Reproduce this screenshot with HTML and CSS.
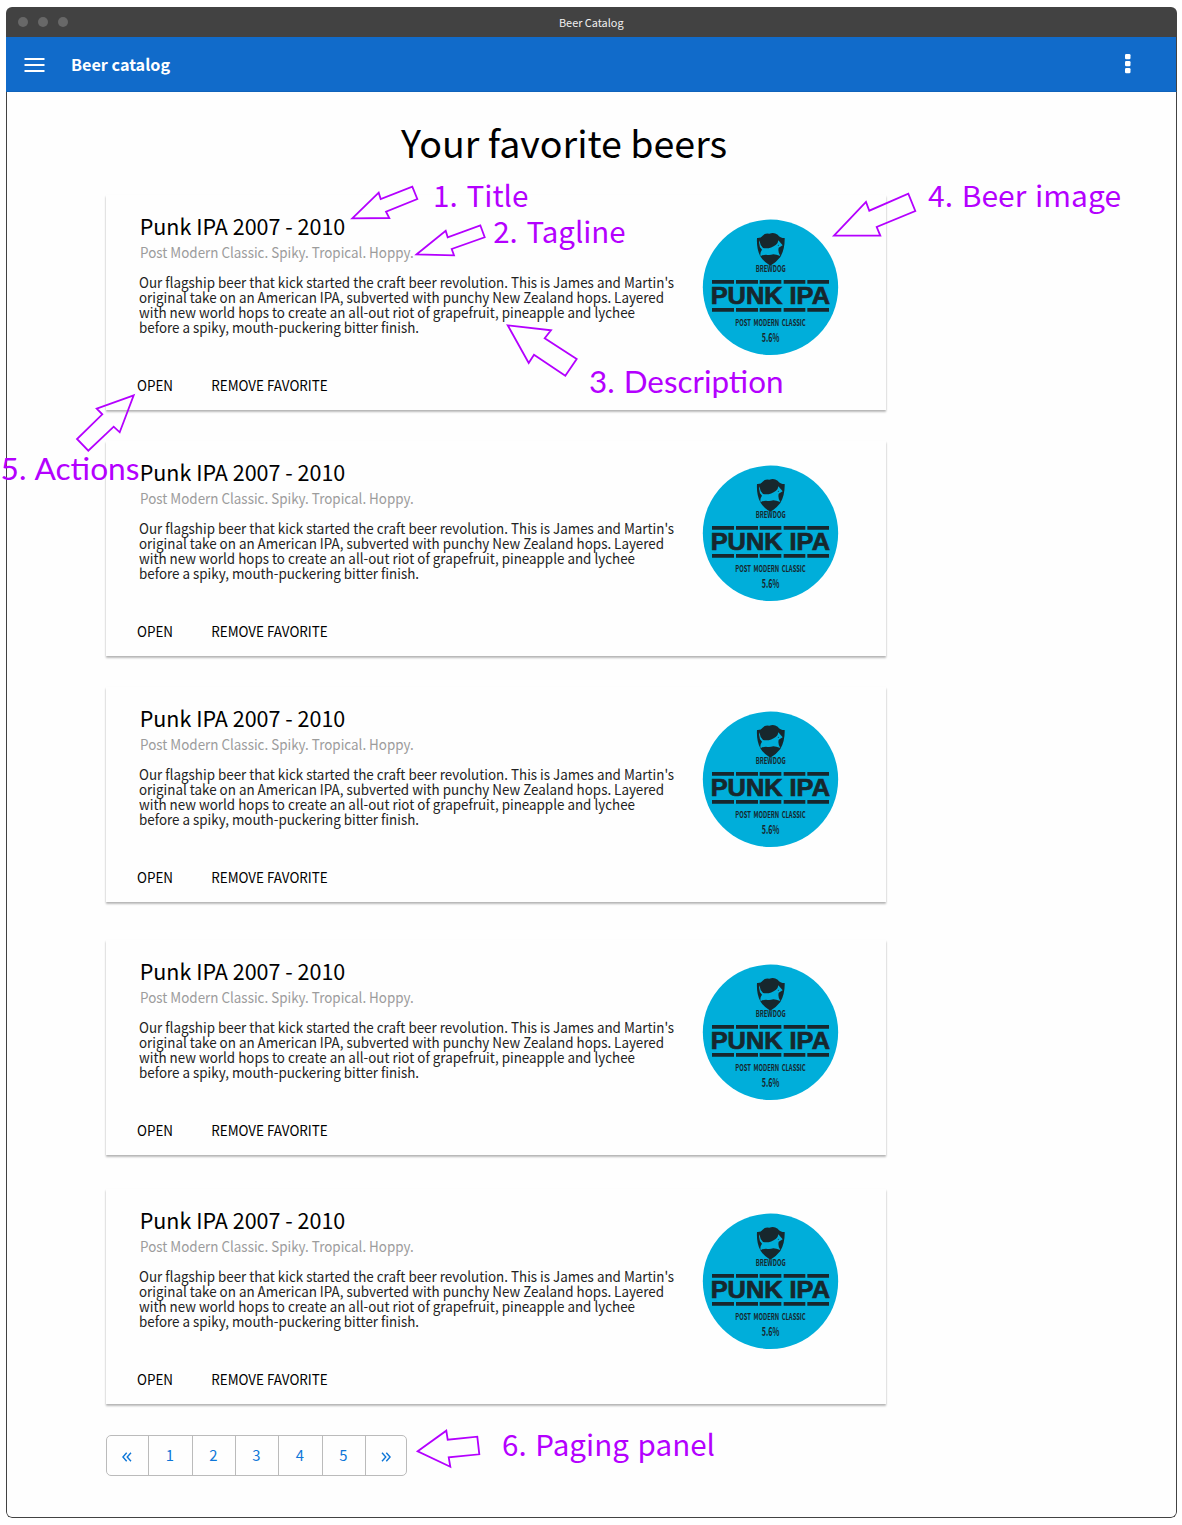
FILE: index.html
```
<!DOCTYPE html>
<html lang="en">
<head>
<meta charset="utf-8">
<title>Beer Catalog</title>
<link rel="stylesheet" href="styles.css">
</head>
<body>
<svg class="defs" width="0" height="0" aria-hidden="true">
  <symbol id="badge" viewBox="0 0 480 480">
    <circle class="badge-disc" cx="241.5" cy="246.800" r="203"/>
    <g class="badge-ink">
      <path d="M201 99Q213 100 218 92Q225 83 238 86Q252 81 263 89Q270 99 284 99Q285 132 271 156Q257 174 241 182Q221 171 211 154Q199 131 201 99Z"/>
      <path d="M66 225h66v11H66zM138 225h66v11h-66zM209 225h65v11h-65zM281 225h65v11h-65zM352 225h65v11h-65zM66 309h66v11H66zM138 309h66v11h-66zM209 309h65v11h-65zM281 309h65v11h-65zM352 309h65v11h-65z"/>
      <text class="badge-small" x="197" y="202" font-size="28" textLength="90" lengthAdjust="spacingAndGlyphs">BREWDOG</text>
      <text class="badge-name" x="62" y="297" font-size="69" textLength="358" lengthAdjust="spacingAndGlyphs">PUNK IPA</text>
      <text class="badge-small" x="136" y="363" font-size="27" textLength="211" lengthAdjust="spacingAndGlyphs" word-spacing="5">POST MODERN CLASSIC</text>
      <text class="badge-small" x="215" y="411" font-size="36" textLength="53" lengthAdjust="spacingAndGlyphs">5.6%</text>
    </g>
    <path class="badge-disc" d="M208 106Q210 121 219 129Q240 133 258 119Q264 115 265 106L278 121L266 128Q263 142 271 153Q258 148 250 148Q238 152 228 149Q219 149 212 154Q209 143 216 134Q205 123 208 106Z"/>
    <circle class="badge-ink" cx="265" cy="121" r="1.500"/>
  </symbol>
</svg>

<div class="window">
  <div class="titlebar">
    <div class="dots"><i></i><i></i><i></i></div>
    <span class="window-title">Beer Catalog</span>
  </div>
  <header class="appbar">
    <svg class="menu" width="21" height="14" viewBox="0 0 21 14"><path d="M0.500 1H20.500M0.500 7H20.500M0.500 13H20.500"/></svg>
    <span class="app-title">Beer catalog</span>
    <svg class="more" width="6" height="20" viewBox="0 0 6 20"><rect width="5.500" height="5.300" rx="1.300"/><rect y="7" width="5.500" height="5.300" rx="1.300"/><rect y="14" width="5.500" height="5.300" rx="1.300"/></svg>
  </header>
  <main class="content">
    <h1>Your favorite beers</h1>

    <article class="card">
      <div class="info">
        <h2>Punk IPA 2007 - 2010</h2>
        <p class="tagline">Post Modern Classic. Spiky. Tropical. Hoppy.</p>
        <p class="desc">Our flagship beer that kick started the craft beer revolution. This is James and Martin's<br>original take on an American IPA, subverted with punchy New Zealand hops. Layered<br>with new world hops to create an all-out riot of grapefruit, pineapple and lychee<br>before a spiky, mouth-puckering bitter finish.</p>
        <div class="actions"><a>OPEN</a><a>REMOVE FAVORITE</a></div>
      </div>
      <svg class="picture" width="160" height="160"><use href="#badge"/></svg>
    </article>

    <article class="card">
      <div class="info">
        <h2>Punk IPA 2007 - 2010</h2>
        <p class="tagline">Post Modern Classic. Spiky. Tropical. Hoppy.</p>
        <p class="desc">Our flagship beer that kick started the craft beer revolution. This is James and Martin's<br>original take on an American IPA, subverted with punchy New Zealand hops. Layered<br>with new world hops to create an all-out riot of grapefruit, pineapple and lychee<br>before a spiky, mouth-puckering bitter finish.</p>
        <div class="actions"><a>OPEN</a><a>REMOVE FAVORITE</a></div>
      </div>
      <svg class="picture" width="160" height="160"><use href="#badge"/></svg>
    </article>

    <article class="card">
      <div class="info">
        <h2>Punk IPA 2007 - 2010</h2>
        <p class="tagline">Post Modern Classic. Spiky. Tropical. Hoppy.</p>
        <p class="desc">Our flagship beer that kick started the craft beer revolution. This is James and Martin's<br>original take on an American IPA, subverted with punchy New Zealand hops. Layered<br>with new world hops to create an all-out riot of grapefruit, pineapple and lychee<br>before a spiky, mouth-puckering bitter finish.</p>
        <div class="actions"><a>OPEN</a><a>REMOVE FAVORITE</a></div>
      </div>
      <svg class="picture" width="160" height="160"><use href="#badge"/></svg>
    </article>

    <article class="card card-fourth">
      <div class="info">
        <h2>Punk IPA 2007 - 2010</h2>
        <p class="tagline">Post Modern Classic. Spiky. Tropical. Hoppy.</p>
        <p class="desc">Our flagship beer that kick started the craft beer revolution. This is James and Martin's<br>original take on an American IPA, subverted with punchy New Zealand hops. Layered<br>with new world hops to create an all-out riot of grapefruit, pineapple and lychee<br>before a spiky, mouth-puckering bitter finish.</p>
        <div class="actions"><a>OPEN</a><a>REMOVE FAVORITE</a></div>
      </div>
      <svg class="picture" width="160" height="160"><use href="#badge"/></svg>
    </article>

    <article class="card card-fifth">
      <div class="info">
        <h2>Punk IPA 2007 - 2010</h2>
        <p class="tagline">Post Modern Classic. Spiky. Tropical. Hoppy.</p>
        <p class="desc">Our flagship beer that kick started the craft beer revolution. This is James and Martin's<br>original take on an American IPA, subverted with punchy New Zealand hops. Layered<br>with new world hops to create an all-out riot of grapefruit, pineapple and lychee<br>before a spiky, mouth-puckering bitter finish.</p>
        <div class="actions"><a>OPEN</a><a>REMOVE FAVORITE</a></div>
      </div>
      <svg class="picture" width="160" height="160"><use href="#badge"/></svg>
    </article>

    <nav class="pager">
      <a><svg width="10" height="10" viewBox="0 0 10 10"><path d="M4.700 .700L.900 5L4.700 9.300M9 .700L5.200 5L9 9.300"/></svg></a>
      <a>1</a><a>2</a><a>3</a><a>4</a><a>5</a>
      <a><svg width="10" height="10" viewBox="0 0 10 10"><path d="M1 .700L4.800 5L1 9.300M5.300 .700L9.100 5L5.300 9.300"/></svg></a>
    </nav>
  </main>
</div>

<svg class="notes" width="1182" height="1525" viewBox="0 0 1182 1525">
  <g class="arrows">
    <path d="M352.300 218.300L378.700 192.700L380.700 199L412.300 186.700L417.300 199L386 211.700L389.300 218Z"/>
    <path d="M416.700 254.300L445.700 230.700L447.700 237.300L480.300 225.300L484.700 237.300L451.700 249L454 255.300Z"/>
    <path d="M507.700 325.300L551 330.300L544.700 338.300L576.700 359L565.300 375.700L534 354.700L528.700 363Z"/>
    <path d="M834 235.700L866 202L869.300 210.700L908.300 193.700L915.300 211L876.700 227L880.300 235.700Z"/>
    <path d="M133.700 395.300L96.700 408.700L102.300 414.300L77 439L88.300 450.700L113.700 426.700L119.700 432.300Z"/>
    <path d="M417.700 1451.300L446.300 1430.700L447.700 1439.700L477.300 1436.700L479.300 1454.300L448.700 1457.300L450.300 1466.700Z"/>
  </g>
  <g class="labels">
    <text x="433" y="207" textLength="95.500" lengthAdjust="spacingAndGlyphs">1. Title</text>
    <text x="493.200" y="243" textLength="132.500" lengthAdjust="spacingAndGlyphs">2. Tagline</text>
    <text class="joined" x="589" y="393" textLength="194.500" lengthAdjust="spacingAndGlyphs">3. Description</text>
    <text x="928" y="207" textLength="193" lengthAdjust="spacingAndGlyphs">4. Beer image</text>
    <text class="joined" x="0.500" y="480" textLength="139" lengthAdjust="spacingAndGlyphs">5. Actions</text>
    <text x="502" y="1456" textLength="213" lengthAdjust="spacingAndGlyphs">6. Paging panel</text>
  </g>
</svg>
</body>
</html>
```
FILE: styles.css
```
* { box-sizing: border-box; }

body {
  margin: 0;
  padding: 7px 5px 7px 6px;
  height: 1525px;
  position: relative;
  background: #fff;
  color: #000;
  font-family: "Noto Sans CJK SC", sans-serif;
}

.defs { position: absolute; }

.window {
  width: 1171px;
  height: 1511px;
  border-radius: 6px;
  overflow: hidden;
  display: flex;
  flex-direction: column;
}

.titlebar {
  flex: none;
  height: 30px;
  background: #424242;
  display: grid;
  grid-template-columns: 1fr auto 1fr;
  align-items: center;
  padding: 0 12px 0 11.500px;
}
.dots { display: flex; gap: 10px; }
.dots i { width: 10px; height: 10px; border-radius: 50%; background: #686868; }
.window-title { font-size: 10.900px; line-height: 16px; color: #f0f0f0; padding-bottom: 1px; }

.appbar {
  flex: none;
  height: 55px;
  background: #116bca;
  border-right: 1px solid #424242;
  border-bottom: 1px solid #0f63bb;
  display: flex;
  align-items: center;
  padding: 1px 45.500px 0 18px;
}
.menu { stroke: #fff; stroke-width: 2; fill: none; }
.app-title { margin: 0 0 2px 26px; font-size: 16.200px; font-weight: 700; line-height: 24px; color: #fff; }
.more { margin-left: auto; margin-top: -2px; fill: #fff; }

.content {
  flex: 1;
  border: 1px solid #424242;
  border-top: 0;
  border-radius: 0 0 6px 6px;
  background: #fefefe;
  padding: 26px 0 0 99px;
}

h1 { margin: 0 0 29px 295px; font-size: 37.600px; font-weight: 400; line-height: 48px; }

.card {
  width: 780px;
  height: 215px;
  margin-bottom: 31px;
  background: #fefefe;
  box-shadow: 0 2px 2px rgba(0, 0, 0, .24), 0 1px 2px rgba(0, 0, 0, .1);
  display: grid;
  grid-template-columns: 584px 160px;
}
.card-fourth { margin-top: 38px; margin-bottom: 34px; }
.info { padding: 17px 0 0 33px; }
.picture { margin-top: 10px; }

h2 { margin: 0 0 0 .700px; font-size: 21.500px; font-weight: 400; line-height: 28px; }

/* Small copy is set slightly condensed. */
.tagline, .desc, .actions { transform: scaleX(.93); transform-origin: left; white-space: nowrap; }
.tagline { margin: 3px 0 13px 1px; font-size: 14.430px; line-height: 18px; color: #9c9c9c; }
.desc { margin: 0 0 41px -.200px; font-size: 14.420px; line-height: 15px; color: #222; }
.actions { display: flex; gap: 41px; margin-left: -2px; font-size: 14.450px; line-height: 19px; }

.badge-disc { fill: #00aeda; }
.badge-ink { fill: #17272d; }
.badge-name { font-family: "Liberation Sans", sans-serif; font-weight: 700; stroke: #17272d; stroke-width: 2; }
.badge-small { font-family: "Noto Sans CJK SC", sans-serif; font-weight: 700; }

.pager {
  width: 301px;
  height: 41px;
  border: 1px solid #bbb;
  border-radius: 5px;
  display: grid;
  grid-template-columns: 42px 44px 43px 43px 44px 43px 40px;
  font-size: 14.800px;
  line-height: 20px;
  color: #0d76d8;
}
.pager a { display: flex; align-items: center; justify-content: center; border-right: 1px solid #bbb; padding: 0 1.500px 2px 0; }
.pager a:last-child { border-right: 0; padding-right: 0; }
.pager svg { margin-top: 4px; fill: none; stroke: #0d76d8; stroke-width: 1.400; }

.notes { position: absolute; left: 0; top: 0; pointer-events: none; }
.arrows { fill: none; stroke: #b400ff; stroke-width: 1.800; }
.labels { fill: #b400ff; font-size: 28.800px; word-spacing: 2px; }
.joined { font-family: Lato, sans-serif; font-size: 30px; word-spacing: 1px; }
```
